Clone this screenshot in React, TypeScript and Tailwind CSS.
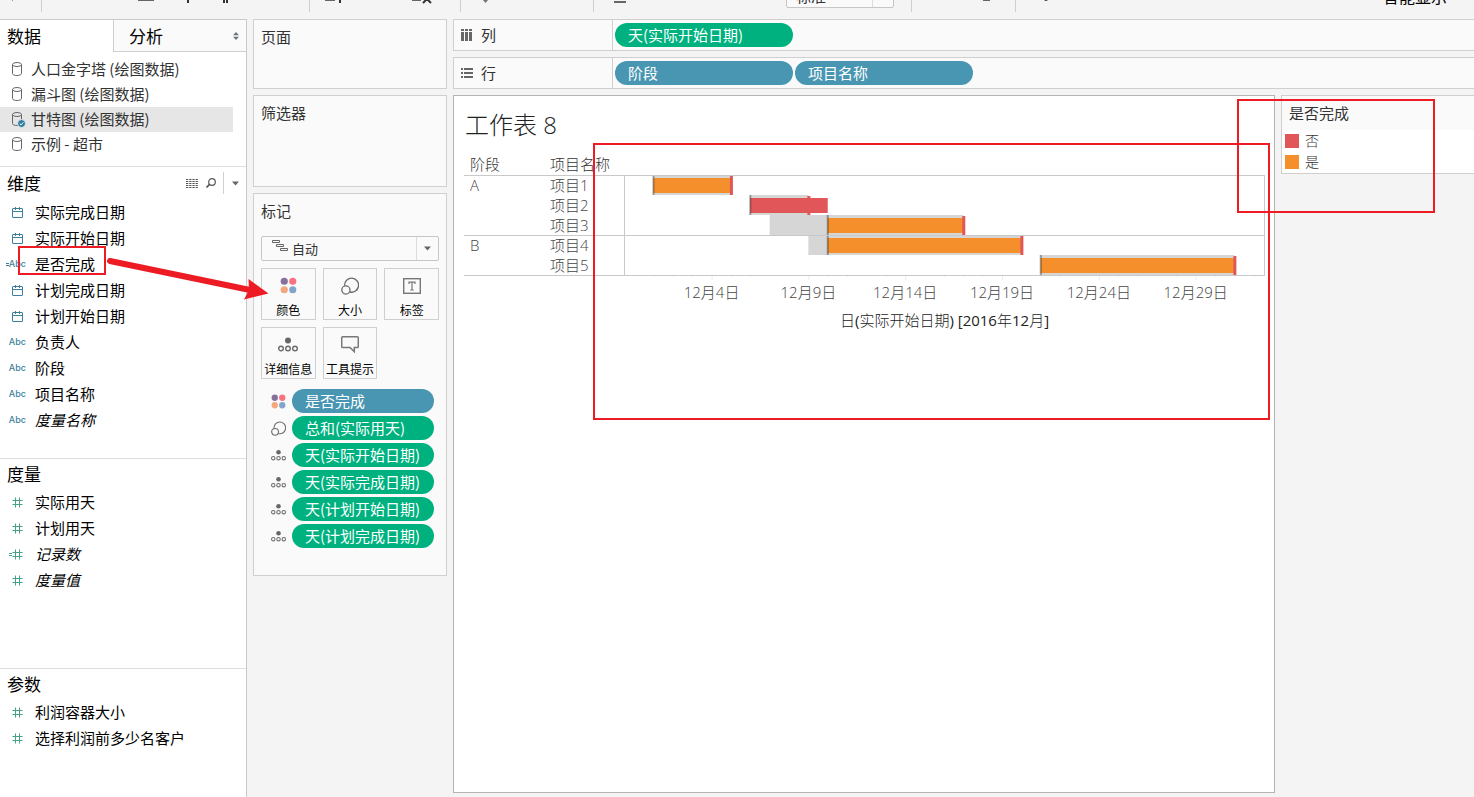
import React from "react";
import clsx from "clsx";

type FieldKind = "date" | "text" | "calcText" | "number" | "calcNumber";

type Field = {
  name: string;
  kind: FieldKind;
  italic?: boolean;
  highlighted?: boolean;
};

type Task = {
  phase?: string;
  name: string;
  plan: [number, number];
  actual: [number, number];
  done: boolean;
};

const sources = [
  { name: "人口金字塔 (绘图数据)" },
  { name: "漏斗图 (绘图数据)" },
  { name: "甘特图 (绘图数据)", active: true },
  { name: "示例 - 超市" },
];

const dimensions: Field[] = [
  { name: "实际完成日期", kind: "date" },
  { name: "实际开始日期", kind: "date" },
  { name: "是否完成", kind: "calcText", highlighted: true },
  { name: "计划完成日期", kind: "date" },
  { name: "计划开始日期", kind: "date" },
  { name: "负责人", kind: "text" },
  { name: "阶段", kind: "text" },
  { name: "项目名称", kind: "text" },
  { name: "度量名称", kind: "text", italic: true },
];

const measures: Field[] = [
  { name: "实际用天", kind: "number" },
  { name: "计划用天", kind: "number" },
  { name: "记录数", kind: "calcNumber", italic: true },
  { name: "度量值", kind: "number", italic: true },
];

const parameters: Field[] = [
  { name: "利润容器大小", kind: "number" },
  { name: "选择利润前多少名客户", kind: "number" },
];

// days of December 2016
const tasks: Task[] = [
  { phase: "A", name: "项目1", plan: [1, 5], actual: [1, 5], done: true },
  { name: "项目2", plan: [6, 9], actual: [6, 10], done: false },
  { name: "项目3", plan: [7, 17], actual: [10, 17], done: true },
  { phase: "B", name: "项目4", plan: [9, 20], actual: [10, 20], done: true },
  { name: "项目5", plan: [21, 31], actual: [21, 31], done: true },
];

const AXIS_START = -0.47;
const AXIS_DAYS = 33;
const pct = (days: number) => `${(days / AXIS_DAYS) * 100}%`;
const dayX = (day: number) => pct(day - AXIS_START);

/* ---------- icons ---------- */

const DatabaseIcon = ({ active }: { active?: boolean }) => (
  <svg width="15" height="17" viewBox="0 0 15 17" fill="none" stroke="#666" className="shrink-0">
    <path d="M1.5 3.500v9c0 1.200 2 2 4.500 2s4.500-.8 4.500-2v-9" />
    <ellipse cx="6" cy="3.500" rx="4.500" ry="2" />
    {active && (
      <>
        <circle cx="10.500" cy="12.500" r="4" fill="#2f7ea1" stroke="#e6e6e6" />
        <path d="M8.700 12.600l1.300 1.300 2.300-2.500" stroke="#fff" />
      </>
    )}
  </svg>
);

const CalendarIcon = () => (
  <svg width="11" height="11" viewBox="0 0 11 11" fill="none" stroke="#3d7f9c">
    <rect x="0.5" y="1.500" width="10" height="9" rx="0.5" />
    <path d="M0.5 4.500h10M3.500 0v3M7.500 0v3" />
  </svg>
);

const HashIcon = () => (
  <svg width="11" height="11" viewBox="0 0 11 11" fill="none" stroke="#43a287">
    <path d="M3.500 0.500v10M7.500 0.500v10M0.500 3.500h10M0.500 7.500h10" />
  </svg>
);

const EqualsIcon = ({ color }: { color: string }) => (
  <svg width="3" height="11" viewBox="0 0 3 11" stroke={color}>
    <path d="M0 4.500h3M0 6.500h3" />
  </svg>
);

const ColorIcon = ({ size }: { size: number }) => (
  <svg width={size} height={size} viewBox="0 0 18 18">
    <circle cx="4.500" cy="4.500" r="3.800" fill="#86719c" />
    <circle cx="13.500" cy="4.500" r="3.800" fill="#fa7280" />
    <circle cx="4.500" cy="13.500" r="3.800" fill="#f3a77c" />
    <circle cx="13.500" cy="13.500" r="3.800" fill="#82a5cc" />
  </svg>
);

const SizeIcon = ({ size }: { size: number }) => (
  <svg width={size} height={size} viewBox="0 0 18 18" fill="none" stroke="#6b6b6b" strokeWidth="1.300">
    <path d="M3.600 8.600A7 7 0 1 1 8.900 15" />
    <circle cx="4.900" cy="13" r="4.100" />
  </svg>
);

const LabelIcon = () => (
  <svg width="18" height="16" viewBox="0 0 18 16" fill="none" stroke="#777" strokeWidth="1.400">
    <rect x="0.7" y="0.7" width="16.600" height="14.600" />
    <path d="M6 6V4.200h6V6M9 4.200V12M7.300 12h3.400" strokeWidth="1.200" />
  </svg>
);

const DetailIcon = ({ size }: { size: number }) => (
  <svg width={size} height={size} viewBox="0 0 20 20" fill="none" stroke="#6b6b6b" strokeWidth="1.400">
    <circle cx="10" cy="5.500" r="3" fill="#666" stroke="none" />
    <circle cx="3" cy="13.500" r="2.300" />
    <circle cx="10" cy="13.500" r="2.300" />
    <circle cx="17" cy="13.500" r="2.300" />
  </svg>
);

const TooltipIcon = () => (
  <svg width="18" height="17" viewBox="0 0 18 17" fill="none" stroke="#777" strokeWidth="1.500">
    <path d="M1.700 0.800h14.600a1 1 0 0 1 1 1v8.700a1 1 0 0 1-1 1h-3v4.200l-4.200-4.200H1.700a1 1 0 0 1-1-1V1.800a1 1 0 0 1 1-1z" />
  </svg>
);

const GanttIcon = () => (
  <svg width="17" height="12" viewBox="0 0 17 12" fill="none" stroke="#666">
    <path d="M0.500 0.500h7v2h-7zM4.500 4.500h7v2h-7zM8.500 8.500h7v2h-7z" />
  </svg>
);

const CaretDown = () => (
  <svg width="7" height="5" viewBox="0 0 7 5" fill="#666">
    <path d="M0 0.500h7L3.500 4.500z" />
  </svg>
);

const FieldIcon = ({ kind }: { kind: FieldKind }) => {
  if (kind === "date") return <CalendarIcon />;
  if (kind === "number" || kind === "calcNumber")
    return (
      <>
        {kind === "calcNumber" && <EqualsIcon color="#43a287" />}
        <HashIcon />
      </>
    );
  return (
    <>
      {kind === "calcText" && <EqualsIcon color="#3d7f9c" />}
      <span className="font-['Inter'] text-[9px] font-medium text-[#3d7f9c]">Abc</span>
    </>
  );
};

/* ---------- left pane ---------- */

const HighlightArrow = () => (
  <svg
    width="170"
    height="50"
    viewBox="0 0 170 50"
    className="pointer-events-none absolute top-2 left-[87px]"
  >
    <path d="M3 5L143 34" stroke="#ed1c24" strokeWidth="6" strokeLinecap="round" />
    <path d="M141.500 23L161.500 37.500L137 43.500L142 34z" fill="#ed1c24" />
  </svg>
);

const FieldRow = ({ field }: { field: Field }) => (
  <li className="relative flex h-[26px] items-center">
    <span className="flex w-[26px] shrink-0 items-center justify-end">
      <span
        className={clsx(
          "flex items-center",
          field.kind !== "text" && field.kind !== "calcText" && "pr-[3px]"
        )}
      >
        <FieldIcon kind={field.kind} />
      </span>
    </span>
    <span className={clsx("pl-[9px] text-[15px] text-black", field.italic && "italic")}>
      {field.name}
    </span>
    {field.highlighted && (
      <span className="pointer-events-none absolute -top-[5px] left-[18px] z-10 h-[29px] w-[88px] border-2 border-[#ed1c24]">
        <HighlightArrow />
      </span>
    )}
  </li>
);

const FieldSection = ({
  title,
  fields,
  className,
  tools,
}: {
  title: string;
  fields: Field[];
  className?: string;
  tools?: React.ReactNode;
}) => (
  <section className={clsx("border-t border-[#dedede]", className)}>
    <header className={clsx("flex items-center justify-between pl-[7px]", tools ? "h-8" : "h-[30px]")}>
      <h2 className="h-7 text-[17px] leading-7 text-black">{title}</h2>
      {tools}
    </header>
    <ul>
      {fields.map((f) => (
        <FieldRow key={f.name} field={f} />
      ))}
    </ul>
  </section>
);

const DimensionTools = () => (
  <div className="flex h-full items-center">
    <button aria-label="查看数据" className="mr-2">
      <svg width="12" height="9" viewBox="0 0 12 9" stroke="#555" strokeDasharray="2.300 0.900">
        <path d="M0 0.500h12M0 2.500h12M0 4.500h12M0 6.500h12M0 8.500h12" />
      </svg>
    </button>
    <button aria-label="查找字段" className="mr-[7px]">
      <svg width="10" height="10" viewBox="0 0 10 10" fill="none" stroke="#555" strokeWidth="1.200">
        <circle cx="6" cy="4" r="3.300" />
        <path d="M3.600 6.400L0.500 9.500" strokeWidth="1.600" />
      </svg>
    </button>
    <button aria-label="菜单" className="flex h-[22px] w-[23px] items-center justify-center border-l border-[#d0d0d0]">
      <CaretDown />
    </button>
  </div>
);

const DataPane = () => (
  <aside className="flex w-[247px] shrink-0 flex-col border-t border-r border-[#c9c9c9] bg-white">
    <div className="flex h-8 shrink-0">
      <button className="w-[113px] pl-[7px] text-left text-[17px] text-black">数据</button>
      <button className="flex flex-1 items-center justify-between border-b border-l border-[#cfcfcf] bg-[#fafafa] pr-[7px] pl-[15px] text-[17px] text-black">
        分析
        <svg width="6" height="8" viewBox="0 0 6 8" fill="#6b7580">
          <path d="M3 0l3 3.200H0zM3 8L0 4.800h6z" />
        </svg>
      </button>
    </div>
    <ul className="pt-[5px] pb-[9px]">
      {sources.map((s) => (
        <li
          key={s.name}
          className={clsx(
            "mr-[13px] flex h-[25px] items-center pl-[11px] text-[15px] text-[#333]",
            s.active && "bg-[#e6e6e6]"
          )}
        >
          <DatabaseIcon active={s.active} />
          <span className="pl-[5px]">{s.name}</span>
        </li>
      ))}
    </ul>
    <FieldSection title="维度" fields={dimensions} className="pb-[25px]" tools={<DimensionTools />} />
    <FieldSection title="度量" fields={measures} className="pb-[75px]" />
    <FieldSection title="参数" fields={parameters} className="pb-6" />
  </aside>
);

/* ---------- cards ---------- */

const Card = ({
  title,
  className,
  children,
}: {
  title: string;
  className?: string;
  children?: React.ReactNode;
}) => (
  <section className={clsx("border border-[#cfcfcf] bg-[#fafafa] px-[7px]", className)}>
    <h2 className="h-[34px] text-[15px] leading-[34px] text-[#333]">{title}</h2>
    {children}
  </section>
);

const Pill = ({
  children,
  blue,
  className,
}: {
  children: React.ReactNode;
  blue?: boolean;
  className?: string;
}) => (
  <button
    className={clsx(
      "flex h-6 items-center rounded-full pl-[13px] text-[15px] whitespace-nowrap text-white",
      blue ? "bg-[#4996b2]" : "bg-[#00b180]",
      className
    )}
  >
    {children}
  </button>
);

const markButtons = [
  { label: "颜色", icon: <ColorIcon size={17} /> },
  { label: "大小", icon: <SizeIcon size={18} /> },
  { label: "标签", icon: <LabelIcon /> },
  { label: "详细信息", icon: <DetailIcon size={20} /> },
  { label: "工具提示", icon: <TooltipIcon /> },
];

const markPills = [
  { label: "是否完成", icon: <ColorIcon size={15} />, blue: true },
  { label: "总和(实际用天)", icon: <SizeIcon size={15} /> },
  { label: "天(实际开始日期)", icon: <DetailIcon size={15} /> },
  { label: "天(实际完成日期)", icon: <DetailIcon size={15} /> },
  { label: "天(计划开始日期)", icon: <DetailIcon size={15} /> },
  { label: "天(计划完成日期)", icon: <DetailIcon size={15} /> },
];

const MarksCard = () => (
  <Card title="标记" className="pb-[27px]">
    <div className="relative mt-2">
      <select
        aria-label="标记类型"
        className="block h-[25px] w-full appearance-none rounded-xs border border-[#c6c6c6] bg-[#fafafa] pl-[30px] text-[13px] text-[#333]"
      >
        <option>自动</option>
      </select>
      <span className="pointer-events-none absolute top-1 left-[11px]">
        <GanttIcon />
      </span>
      <span className="pointer-events-none absolute inset-y-px right-px flex w-[22px] items-center justify-center border-l border-[#dcdcdc]">
        <CaretDown />
      </span>
    </div>
    <div className="mt-[7px] grid grid-cols-3 gap-[7px]">
      {markButtons.map((b) => (
        <button
          key={b.label}
          className="flex h-[52px] flex-col items-center border border-[#cfcfcf] text-[12px] whitespace-nowrap text-black"
        >
          <span className="flex h-[33px] shrink-0 items-center">{b.icon}</span>
          <span className="leading-4">{b.label}</span>
        </button>
      ))}
    </div>
    <ul className="mt-[10px] flex flex-col gap-[3px] pr-[5px] pl-[10px]">
      {markPills.map((p) => (
        <li key={p.label} className="flex items-center gap-[6px]">
          {p.icon}
          <Pill blue={p.blue} className="flex-1">
            {p.label}
          </Pill>
        </li>
      ))}
    </ul>
  </Card>
);

const Shelf = ({
  label,
  icon,
  children,
}: {
  label: string;
  icon: React.ReactNode;
  children: React.ReactNode;
}) => (
  <div className="flex h-8 border border-r-0 border-[#cfcfcf] bg-[#fafafa]">
    <div className="flex w-[159px] shrink-0 items-center gap-2 border-r border-[#cfcfcf] pl-[7px] text-[15px] text-[#333]">
      {icon}
      {label}
    </div>
    <div className="flex items-center gap-[2px] pl-[2px]">{children}</div>
  </div>
);

/* ---------- worksheet ---------- */

const GanttChart = () => (
  <div className="relative mr-[9px] ml-[10px] font-['Open_Sans','Noto_Sans_CJK_SC',sans-serif] font-light">
    <div className="flex h-[30px] items-end pb-px pl-[6px] text-[15px] leading-5 text-[#333]">
      <span className="w-20">阶段</span>
      <span>项目名称</span>
    </div>
    <div className="flex">
      <div className="w-40 shrink-0 border-b border-[#c9c9c9]">
        {tasks.map((t) => (
          <div
            key={t.name}
            className={clsx(
              "flex h-5 items-center pl-[6px] text-[15px] text-[#444]",
              t.phase && "border-t border-[#c9c9c9]"
            )}
          >
            <span className="w-20">{t.phase}</span>
            <span>{t.name}</span>
          </div>
        ))}
      </div>
      <div className="flex-1 border-x border-b border-[#c9c9c9]">
        <svg width="100%" height="100" className="block">
          {tasks.map((t, i) => {
            const y = i * 20;
            return (
              <g key={t.name}>
                <rect x={dayX(t.plan[0])} y={y} width={pct(t.plan[1] - t.plan[0])} height="20" fill="#d6d6d6" />
                <rect
                  x={dayX(t.actual[0])}
                  y={y + 3}
                  width={pct(t.actual[1] - t.actual[0])}
                  height="15"
                  fill={t.done ? "#f58f2b" : "#e15759"}
                />
                <rect x={dayX(t.actual[0])} y={y} width="2" height="20" fill="#000" opacity="0.35" transform="translate(-1 0)" />
                <rect x={dayX(t.plan[1])} y={y + 1} width="3" height="19" fill="#e15759" transform="translate(-1 0)" />
              </g>
            );
          })}
          <path d="M0 0.500h4000M0 60.500h4000" stroke="#c9c9c9" />
        </svg>
      </div>
    </div>
    <div className="ml-[161px] pr-px">
      <svg width="100%" height="34" className="block text-[15px]">
        {Array.from({ length: 33 }, (_, d) => (
          <rect key={d} x={dayX(d)} y="0" width="1" height={d % 5 === 4 ? 4 : 1} fill="#ececec" />
        ))}
        {[4, 9, 14, 19, 24, 29].map((d) => (
          <text key={d} x={dayX(d)} y="22" textAnchor="middle" fill="#444">
            {`12月${d}日`}
          </text>
        ))}
      </svg>
      <p className="text-center text-[15px] leading-5 text-[#222] [&>span]:font-normal">
        日<span>(</span>实际开始日期<span>) [2016</span>年<span>12</span>月<span>]</span>
      </p>
    </div>
    <span className="pointer-events-none absolute -top-[2px] -right-[5px] left-[129px] z-10 h-[277px] border-2 border-[#ed1c24]" />
  </div>
);

const Worksheet = () => (
  <main className="min-w-0 flex-1 border border-[#b3b3b3] bg-white">
    <h1 className="mt-[9px] h-10 pl-[11px] font-['Open_Sans','Noto_Sans_CJK_SC',sans-serif] text-[24px] leading-10 font-light text-[#222]">
      工作表 8
    </h1>
    <GanttChart />
  </main>
);

const Legend = () => (
  <section className="relative w-[193px] shrink-0 self-start border border-r-0 border-[#cfcfcf] bg-white pb-px">
    <h2 className="h-[34px] bg-[#fafafa] pl-[7px] text-[15px] leading-[34px] text-[#333]">是否完成</h2>
    <ul className="pl-[3px] text-[14px] font-light text-[#333]">
      <li className="flex h-[21px] items-center gap-[6px]">
        <span className="size-[14px] bg-[#e15759]" />否
      </li>
      <li className="flex h-[21px] items-center gap-[6px]">
        <span className="size-[14px] bg-[#f58f2b]" />是
      </li>
    </ul>
    <span className="pointer-events-none absolute top-[3px] right-[39px] -left-[45px] z-10 h-[114px] border-2 border-[#ed1c24]" />
  </section>
);

/* ---------- toolbar, scrolled halfway out of view ---------- */

const Toolbar = () => (
  <div className="h-[19px] shrink-0 overflow-hidden">
    <div className="-mt-4 flex h-7">
      <div className="w-[42px] shrink-0 border-r border-[#cfcfcf]">
        <svg width="41" height="28" viewBox="0 0 41 28" fill="#8a93bd">
          <path d="M12 8h1v9h-1z" />
        </svg>
      </div>
      <div className="w-[268px] shrink-0 border-r border-[#cfcfcf]">
        <svg width="267" height="28" viewBox="0 0 267 28" fill="#666">
          <path d="M96 4h16v13H96z" />
          <path d="M145 8h2v11h-2zM181 8h2v11h-2zM184 8h2v11h-2z" fill="#333" />
        </svg>
      </div>
      <div className="w-[151px] shrink-0 border-r border-[#cfcfcf]">
        <svg width="150" height="28" viewBox="0 0 150 28" fill="#666">
          <path d="M15 14h10v3H15zM102 14h9v3h-9z" />
          <path d="M29 8h2v11h-2z" fill="#333" />
          <path d="M113 11l8 8M121 11l-8 8" stroke="#333" strokeWidth="2" />
        </svg>
      </div>
      <div className="w-[133px] shrink-0 border-r border-[#cfcfcf]">
        <svg width="132" height="28" viewBox="0 0 132 28" fill="#777">
          <path d="M21 15h7l-3.500 4z" />
        </svg>
      </div>
      <div className="flex w-[318px] shrink-0 items-start border-r border-[#cfcfcf]">
        <svg width="192" height="28" viewBox="0 0 192 28" fill="#666">
          <path d="M20 17h12v2H20z" />
        </svg>
        <div className="relative w-[108px]">
          <select
            aria-label="视图大小"
            className="block h-6 w-full appearance-none rounded-xs border border-[#c6c6c6] bg-[#fafafa] pl-[9px] text-[15px] text-[#333]"
          >
            <option>标准</option>
          </select>
          <span className="pointer-events-none absolute inset-y-px right-px w-[21px] border-l border-[#dcdcdc]" />
        </div>
      </div>
      <div className="w-[104px] shrink-0 border-r border-[#cfcfcf]">
        <svg width="103" height="28" viewBox="0 0 103 28" fill="#666">
          <path d="M71 12h7v5h-7z" />
        </svg>
      </div>
      <div className="flex flex-1 items-start justify-between pr-[27px]">
        <svg width="60" height="28" viewBox="0 0 60 28" fill="#444">
          <circle cx="30" cy="15" r="2" />
        </svg>
        <button className="h-6 text-[16px] leading-6 text-black">智能显示</button>
      </div>
    </div>
  </div>
);

const App = () => (
  <div className="flex min-h-screen flex-col overflow-hidden bg-[#f4f4f4] font-['Noto_Sans_CJK_SC',sans-serif]">
    <Toolbar />
    <div className="flex flex-1">
      <DataPane />
      <div className="ml-[6px] flex w-[194px] shrink-0 flex-col gap-[6px]">
        <Card title="页面" className="h-[70px]" />
        <Card title="筛选器" className="h-[92px]" />
        <MarksCard />
      </div>
      <div className="ml-[6px] flex min-w-0 flex-1 flex-col gap-[6px] pb-1">
        <Shelf
          label="列"
          icon={
            <svg width="12" height="12" viewBox="0 0 12 12" fill="#666">
              <path d="M0 0h3v2H0zM4 0h3v2H4zM8 0h3v2H8zM0 3h3v9H0zM4 3h3v9H4zM8 3h3v9H8z" />
            </svg>
          }
        >
          <Pill className="w-[178px]">天(实际开始日期)</Pill>
        </Shelf>
        <Shelf
          label="行"
          icon={
            <svg width="12" height="10" viewBox="0 0 12 10" fill="#666">
              <path d="M0 0h2v2H0zM0 4h2v2H0zM0 8h2v2H0zM3 0h9v2H3zM3 4h9v2H3zM3 8h9v2H3z" />
            </svg>
          }
        >
          <Pill blue className="w-[178px]">阶段</Pill>
          <Pill blue className="w-[178px]">项目名称</Pill>
        </Shelf>
        <div className="flex flex-1 gap-[6px]">
          <Worksheet />
          <Legend />
        </div>
      </div>
    </div>
  </div>
);

export default App;
